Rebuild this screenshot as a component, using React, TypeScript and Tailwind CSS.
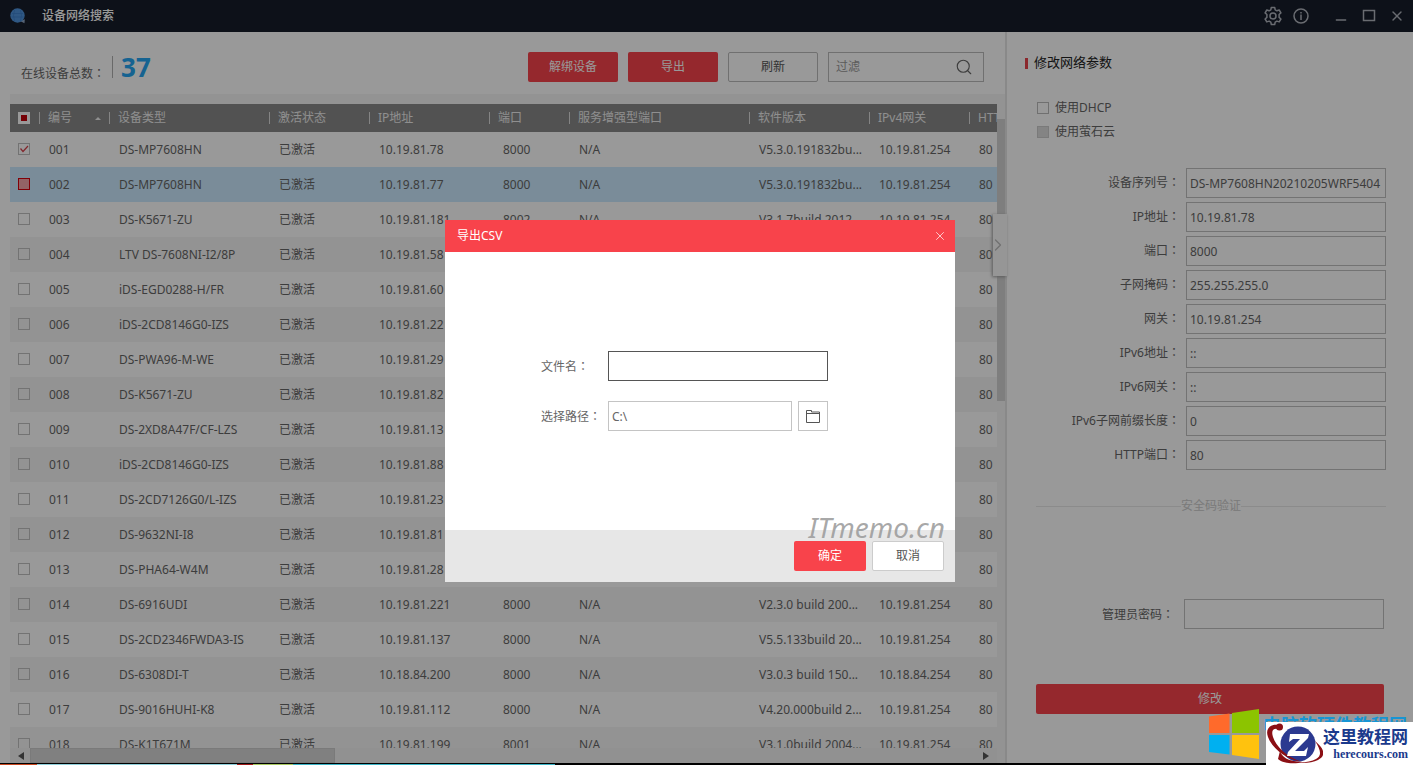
import { ChevronRight, Minus, Search, X } from 'lucide-react';

type Device = {
  no: string;
  type: string;
  ip: string;
  port?: string;
  enhanced?: string;
  version?: string;
  gateway?: string;
};

const devices: Device[] = [
  { no: '001', type: 'DS-MP7608HN', ip: '10.19.81.78', port: '8000', enhanced: 'N/A', version: 'V5.3.0.191832bu...', gateway: '10.19.81.254' },
  { no: '002', type: 'DS-MP7608HN', ip: '10.19.81.77', port: '8000', enhanced: 'N/A', version: 'V5.3.0.191832bu...', gateway: '10.19.81.254' },
  { no: '003', type: 'DS-K5671-ZU', ip: '10.19.81.181', port: '8002', enhanced: 'N/A', version: 'V3.1.7build 2012...', gateway: '10.19.81.254' },
  { no: '004', type: 'LTV DS-7608NI-I2/8P', ip: '10.19.81.58' },
  { no: '005', type: 'iDS-EGD0288-H/FR', ip: '10.19.81.60' },
  { no: '006', type: 'iDS-2CD8146G0-IZS', ip: '10.19.81.22' },
  { no: '007', type: 'DS-PWA96-M-WE', ip: '10.19.81.29' },
  { no: '008', type: 'DS-K5671-ZU', ip: '10.19.81.82' },
  { no: '009', type: 'DS-2XD8A47F/CF-LZS', ip: '10.19.81.13' },
  { no: '010', type: 'iDS-2CD8146G0-IZS', ip: '10.19.81.88' },
  { no: '011', type: 'DS-2CD7126G0/L-IZS', ip: '10.19.81.23' },
  { no: '012', type: 'DS-9632NI-I8', ip: '10.19.81.81' },
  { no: '013', type: 'DS-PHA64-W4M', ip: '10.19.81.28' },
  { no: '014', type: 'DS-6916UDI', ip: '10.19.81.221', port: '8000', enhanced: 'N/A', version: 'V2.3.0 build 200...', gateway: '10.19.81.254' },
  { no: '015', type: 'DS-2CD2346FWDA3-IS', ip: '10.19.81.137', port: '8000', enhanced: 'N/A', version: 'V5.5.133build 20...', gateway: '10.19.81.254' },
  { no: '016', type: 'DS-6308DI-T', ip: '10.18.84.200', port: '8000', enhanced: 'N/A', version: 'V3.0.3 build 150...', gateway: '10.18.84.254' },
  { no: '017', type: 'DS-9016HUHI-K8', ip: '10.19.81.112', port: '8000', enhanced: 'N/A', version: 'V4.20.000build 2...', gateway: '10.19.81.254' },
  { no: '018', type: 'DS-K1T671M', ip: '10.19.81.199', port: '8001', enhanced: 'N/A', version: 'V3.1.0build 2004...', gateway: '10.19.81.254' },
];

const columns = [
  { label: '编号', width: 'w-[70px]' },
  { label: '设备类型', width: 'w-40' },
  { label: '激活状态', width: 'w-[100px]' },
  { label: 'IP地址', width: 'w-[120px]' },
  { label: '端口', width: 'w-20' },
  { label: '服务增强型端口', width: 'w-[180px]' },
  { label: '软件版本', width: 'w-[120px]' },
  { label: 'IPv4网关', width: 'w-[100px]' },
  { label: 'HTTP端口', width: '' },
];

const fields = [
  { id: 'serial', label: '设备序列号', value: 'DS-MP7608HN20210205WRF5404' },
  { id: 'ip', label: 'IP地址', value: '10.19.81.78' },
  { id: 'port', label: '端口', value: '8000' },
  { id: 'mask', label: '子网掩码', value: '255.255.255.0' },
  { id: 'gateway', label: '网关', value: '10.19.81.254' },
  { id: 'ipv6', label: 'IPv6地址', value: '::' },
  { id: 'ipv6-gateway', label: 'IPv6网关', value: '::' },
  { id: 'ipv6-prefix', label: 'IPv6子网前缀长度', value: '0' },
  { id: 'http-port', label: 'HTTP端口', value: '80' },
];

// The TC face centres the full-width colon in its cell
function Colon() {
  return <span className="font-['Noto_Sans_CJK_TC',sans-serif]">：</span>;
}

function TitleBar() {
  return (
    <header className="flex h-8 shrink-0 items-center bg-[#161d2a] pl-[10px] pr-2 text-white">
      <svg viewBox="0 0 16 16" className="size-4">
        <path d="M10 13l4.500 2.200.300-4z" fill="#8fa6c4" />
        <circle cx="7.500" cy="7.500" r="7.200" fill="#4f93dc" />
        <path d="M2 5.500h11M1.500 9h12M4.500 2Q2.500 7.500 4.500 13M10.500 2Q12.500 7.500 10.500 13" stroke="#3a7cc8" strokeWidth="0.700" fill="none" />
      </svg>
      <h1 className="ml-4 text-xs font-medium">设备网络搜索</h1>
      <div className="ml-auto flex items-center text-[#b0b4bd]">
        <button aria-label="设置" className="mr-[10px]">
          <svg viewBox="0 0 20 20" className="size-5" fill="none" stroke="currentColor" strokeWidth="1.500" strokeLinejoin="round">
            <path d="M8.300 1.500h3.400l.5 2.300 1.700 1 2.300-.8 1.700 2.900-1.800 1.600v2.900l1.800 1.600-1.700 2.900-2.300-.8-1.700 1-.5 2.400H8.300l-.5-2.400-1.700-1-2.300.8L2.100 13l1.800-1.600V8.500L2.100 6.900 3.800 4l2.300.8 1.700-1z" />
            <circle cx="10" cy="10" r="3" />
          </svg>
        </button>
        <button aria-label="关于" className="mr-6">
          <svg viewBox="0 0 16 16" className="size-4" fill="none" stroke="currentColor" strokeWidth="1.500">
            <circle cx="8" cy="8" r="7" />
            <path d="M8 4v1.500M8 6.500V12" />
          </svg>
        </button>
        <button aria-label="最小化" className="mr-3 mt-2">
          <Minus className="size-4" strokeWidth={2} />
        </button>
        <button aria-label="最大化" className="mr-3">
          <svg viewBox="0 0 16 16" className="size-4" fill="none" stroke="currentColor" strokeWidth="1.500">
            <path d="M2.500 2.500h11v10h-11z" />
          </svg>
        </button>
        <button aria-label="关闭">
          <X className="size-4" strokeWidth={2} />
        </button>
      </div>
    </header>
  );
}

function Toolbar() {
  return (
    <div className="flex h-[62px] items-center pl-[21px] pr-[21px] pt-2">
      <span className="mt-3 text-xs text-[#666]">
        在线设备总数
        <Colon />
      </span>
      <strong className="ml-[7px] flex h-[22px] items-center border-l border-[#b0b0b0] pl-2 text-[26px] font-bold leading-[22px] text-[#26a6f2]">
        37
      </strong>
      <div className="ml-auto flex gap-[10px] text-xs">
        <button className="h-[30px] w-[90px] rounded-xs bg-[#f8434b] text-white">解绑设备</button>
        <button className="h-[30px] w-[90px] rounded-xs bg-[#f8434b] text-white">导出</button>
        <button className="h-[30px] w-[90px] rounded-xs border border-[#bbb] text-[#555]">刷新</button>
        <div className="flex h-[30px] w-[156px] items-center border border-[#bbb] pl-[7px] pr-[10px]">
          <input
            aria-label="过滤"
            placeholder="过滤"
            className="min-w-0 flex-1 bg-transparent outline-none placeholder:text-[#999]"
          />
          <Search className="size-[18px] text-[#666]" strokeWidth={1.5} />
        </div>
      </div>
    </div>
  );
}

function RowCheckbox({ index, no }: { index: number; no: string }) {
  const checked = index === 0;
  return (
    <span className="grid size-3 place-items-center">
      <input
        type="checkbox"
        aria-label={no}
        defaultChecked={checked}
        className={
          index === 1
            ? 'col-start-1 row-start-1 size-3 appearance-none border border-[#d8000c] bg-[#f5a5aa]'
            : 'col-start-1 row-start-1 size-3 appearance-none border border-[#c0c0c0]'
        }
      />
      {checked && (
        <svg viewBox="0 0 12 12" className="pointer-events-none col-start-1 row-start-1 size-3">
          <path d="M2.500 5.500l2.500 3 5-5.500" fill="none" stroke="#d8404a" strokeWidth="1.200" />
        </svg>
      )}
    </span>
  );
}

function rowColor(index: number) {
  if (index === 1) return 'bg-[#cbeaff]';
  return index % 2 === 1 ? 'bg-[#f6f6f6]' : 'bg-white';
}

function DeviceTable() {
  return (
    <div className="ml-[10px] flex min-h-0 flex-1 bg-[#f6f6f6] pt-[10px]">
      <div className="flex min-w-0 flex-1 flex-col">
        <div className="min-h-0 flex-1 overflow-hidden">
          <table className="w-full table-fixed border-collapse text-xs text-[#666]">
            <thead>
              <tr className="h-7 bg-[#898989] text-left text-[#eee]">
                <th className="w-[29px] pl-2">
                  <span className="grid size-3 place-items-center bg-white">
                    <input
                      type="checkbox"
                      aria-label="全选"
                      className="size-[6px] appearance-none bg-[#c4000a]"
                    />
                  </span>
                </th>
                {columns.map((col) => (
                  <th key={col.label} className={`${col.width} overflow-hidden whitespace-nowrap p-0 font-normal`}>
                    <span className="flex h-3 items-center border-l border-[#ddd] pl-2">
                      {col.label}
                      {col.label === '编号' && (
                        <svg viewBox="0 0 6 3" className="ml-auto mr-2 h-[3px] w-[6px]">
                          <path d="M0 3l3-3 3 3z" fill="#eee" />
                        </svg>
                      )}
                    </span>
                  </th>
                ))}
              </tr>
            </thead>
            <tbody>
              {devices.map((d, i) => (
                <tr key={d.no} className={`h-[35px] whitespace-nowrap ${rowColor(i)}`}>
                  <td className="pb-px pl-2">
                    <RowCheckbox index={i} no={d.no} />
                  </td>
                  <td className="pl-[10px]">{d.no}</td>
                  <td className="pl-[10px]">{d.type}</td>
                  <td className="pl-[10px]">已激活</td>
                  <td className="pl-[10px]">{d.ip}</td>
                  <td className="pl-[14px]">{d.port}</td>
                  <td className="pl-[10px]">{d.enhanced}</td>
                  <td className="pl-[10px]">{d.version}</td>
                  <td className="pl-[10px]">{d.gateway}</td>
                  <td className="pl-[10px]">80</td>
                </tr>
              ))}
            </tbody>
          </table>
        </div>
        {/* Horizontal scrollbar */}
        <div className="flex h-[15px] shrink-0 items-center bg-[#f2f2f2]">
          <svg viewBox="0 0 6 8" className="ml-2 h-2 w-[6px]">
            <path d="M6 0v8L0 4z" fill="#555" />
          </svg>
          <span className="ml-[6px] h-full w-[305px] border border-[#ccc] bg-[#d6d6d6]" />
          <svg viewBox="0 0 6 8" className="ml-auto mr-2 h-2 w-[6px]">
            <path d="M0 0v8l6-4z" fill="#555" />
          </svg>
        </div>
      </div>
      {/* Vertical scrollbar */}
      <div className="w-2 shrink-0 bg-[#f6f6f6] pt-[15px]">
        <div className="h-[282px] bg-[#d2d2d2]" />
      </div>
    </div>
  );
}

function ParamsPanel() {
  return (
    <aside className="relative flex w-[408px] shrink-0 flex-col border-l-2 border-[#e4e4e4] bg-white text-xs text-[#666]">
      <button
        aria-label="收起"
        className="absolute -left-[14px] top-[182px] flex h-[62px] w-[14px] items-center justify-center bg-[#fafafa] pr-1 text-[#bbb] shadow-[-1px_1px_3px_#999]"
      >
        <ChevronRight className="size-5 shrink-0" strokeWidth={1.5} />
      </button>
      <h2 className="ml-[18px] mt-[22px] flex h-[18px] items-center gap-[6px] text-[13px] text-[#222]">
        <span className="h-[11px] w-[3px] bg-[#e8434b]" />
        修改网络参数
      </h2>
      <div className="ml-[30px] mt-7 flex flex-col gap-2 leading-4">
        <label className="flex items-center gap-[6px]">
          <input type="checkbox" className="size-3 appearance-none border border-[#bbb]" />
          使用DHCP
        </label>
        <label className="flex items-center gap-[6px]">
          <input type="checkbox" disabled className="size-3 appearance-none border border-[#ccc] bg-[#ddd]" />
          使用萤石云
        </label>
      </div>
      <div className="mr-[27px] mt-7 flex flex-col gap-1">
        {fields.map((f) => (
          <div key={f.id} className="flex items-start justify-end gap-[6px]">
            <label htmlFor={f.id} className="leading-7">
              {f.label}
              <Colon />
            </label>
            <input
              id={f.id}
              defaultValue={f.value}
              className="h-[30px] w-[200px] border border-[#c0c0c0] bg-transparent pl-[3px] outline-none"
            />
          </div>
        ))}
      </div>
      <div className="ml-[29px] mr-[27px] mt-7 flex items-center text-[#ccc]">
        <span className="h-px flex-1 bg-[#e8e8e8]" />
        安全码验证
        <span className="h-px flex-1 bg-[#e8e8e8]" />
      </div>
      <div className="mr-[29px] mt-[85px] flex items-center justify-end gap-[10px]">
        <label htmlFor="password">
          管理员密码
          <Colon />
        </label>
        <input
          id="password"
          type="password"
          className="h-[30px] w-[200px] border border-[#c0c0c0] bg-transparent px-1 outline-none"
        />
      </div>
      <button className="ml-[29px] mr-[29px] mt-[55px] h-[30px] rounded-xs bg-[#f8434b] text-white">修改</button>
    </aside>
  );
}

function ExportDialog() {
  return (
    <div className="absolute inset-0 flex items-start justify-center bg-black/40 pr-[13px] pt-[220px]">
      <div role="dialog" aria-label="导出CSV" className="relative w-[510px] bg-white text-xs text-[#666]">
        <div className="flex h-8 items-center justify-between bg-[#f8434b] pl-3 pr-2 text-white">
          导出CSV
          <button aria-label="关闭">
            <X className="size-[14px] text-white/80" strokeWidth={1.5} />
          </button>
        </div>
        <div className="flex h-[278px] flex-col gap-5 pl-24 pt-[99px]">
          <div className="flex items-center">
            <label htmlFor="file-name" className="w-[67px]">
              文件名
              <Colon />
            </label>
            <input id="file-name" className="h-[30px] w-[220px] border border-[#555] px-1 outline-none" />
          </div>
          <div className="flex items-center">
            <label htmlFor="file-path" className="w-[67px]">
              选择路径
              <Colon />
            </label>
            <input
              id="file-path"
              defaultValue="C:\"
              className="h-[30px] w-[184px] border border-[#c4c4c4] px-[3px] outline-none"
            />
            <button
              aria-label="浏览"
              className="ml-[6px] flex size-[30px] items-center justify-center border border-[#c4c4c4]"
            >
              <svg viewBox="0 0 16 14" className="h-[14px] w-4" fill="none" stroke="#555">
                <path d="M1.500 13.500v-12h5v1.500h8v10.500zM1.500 4.500h13" />
              </svg>
            </button>
          </div>
        </div>
        <div className="flex h-[52px] items-center justify-end gap-[6px] bg-[#e7e7e7] pr-[11px]">
          <button className="h-[30px] w-[72px] rounded-xs bg-[#f8434b] text-white">确定</button>
          <button className="h-[30px] w-[72px] rounded-xs border border-[#ccc] bg-white text-[#555]">取消</button>
        </div>
        <span className="absolute bottom-10 right-[10px] text-[28px] italic leading-[30px] text-[#999]/85">
          ITmemo.cn
        </span>
      </div>
    </div>
  );
}

function SiteBadges() {
  return (
    <div className="absolute bottom-0 right-0 h-14 w-[204px]">
      <svg viewBox="0 0 50 50" className="absolute left-0 top-0 size-[50px]">
        <path d="M0 7.500L20.500 4.500V24H0z" fill="#ff6a2b" />
        <path d="M23 4L50 0v24H23z" fill="#8cc400" />
        <path d="M0 26h20.500v19.500L0 43z" fill="#00b0f0" />
        <path d="M23 26h27v24l-27-4z" fill="#ffc20e" />
      </svg>
      <span className="absolute left-[54px] top-[6px] whitespace-nowrap text-lg font-bold leading-5 text-[#1795d4]">
        电脑软硬件教程网
      </span>
      <div className="absolute bottom-0 right-0 flex h-[43px] w-[147px] items-center bg-white">
        <svg viewBox="0 0 57 43" className="h-[43px] w-[57px] shrink-0">
          <circle cx="32" cy="22" r="17.500" fill="#2b3990" />
          <path d="M12 3C4 2-1 7 2 15c4 11 17 22 34 25C20 35 10 24 7 15 5 9 7 6 12 7z" fill="#8b0f14" />
          <path d="M14 29c2 6 7 10 22 11-5 2-19 2-24-3z" fill="#8b0f14" />
          <circle cx="13.500" cy="5" r="3.500" fill="#8b0f14" />
          <path d="M49 19c10 8 11 15 3 19-6 3-16 4-25 2 9 1 18 0 23-3 6-3 5-9-1-18z" fill="#8b0f14" />
          <path d="M24 12h19l-1 4-13 13h9l4-4-2 9H21l1-4 12-13h-7l-4 3z" fill="#fff" />
        </svg>
        <div className="flex flex-col items-end">
          <span className="whitespace-nowrap text-[17px] font-bold leading-5 text-[#1b3a8c]">这里教程网</span>
          <a
            href="#"
            className="font-['Liberation_Serif',serif] text-xs font-bold leading-[14px] text-[#1b3a8c]"
          >
            herecours.com
          </a>
        </div>
      </div>
    </div>
  );
}

export default function App() {
  return (
    <div className="relative flex h-screen flex-col overflow-hidden bg-white font-['Noto_Sans','Noto_Sans_CJK_SC',sans-serif]">
      <TitleBar />
      <div className="flex min-h-0 flex-1">
        <main className="flex min-w-0 flex-1 flex-col">
          <Toolbar />
          <DeviceTable />
        </main>
        <ParamsPanel />
      </div>
      <ExportDialog />
      {/* Sliver of the desktop below the window */}
      <div className="relative flex h-[2px] shrink-0 border-t border-black bg-black">
        <span className="w-[37px] bg-[#c8461e]" />
        <span className="w-[200px] bg-[#8fd0dc]" />
        <span className="w-4 bg-[#a01818]" />
        <span className="w-[40px] bg-[#a8c860]" />
        <span className="w-[262px] bg-[#3ab4c8]" />
      </div>
      <SiteBadges />
    </div>
  );
}
